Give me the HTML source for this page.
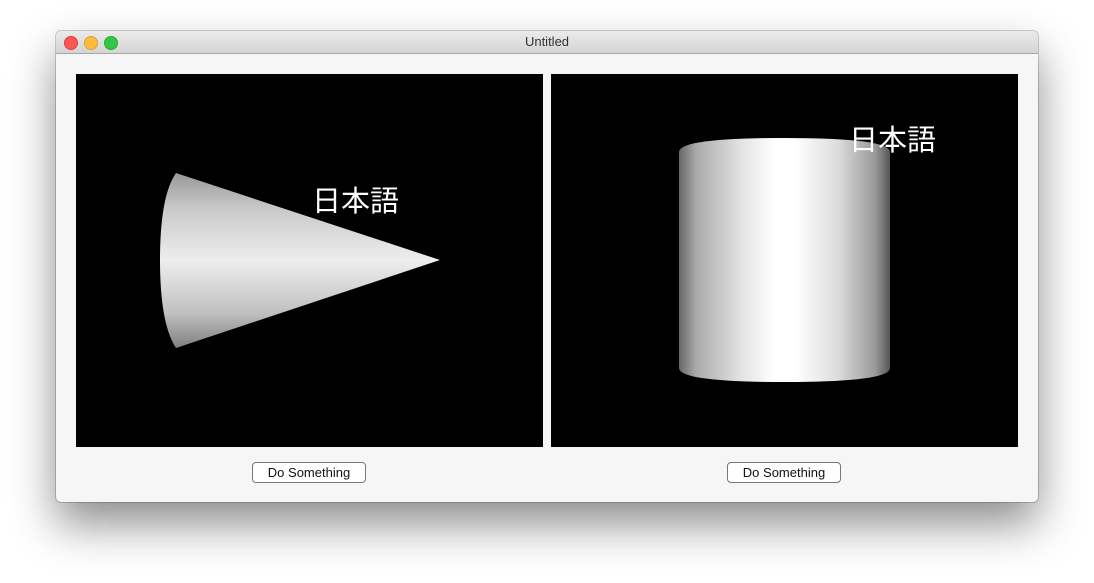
<!DOCTYPE html>
<html><head><meta charset="utf-8"><style>
html,body{margin:0;padding:0;background:#fff;width:1094px;height:583px;overflow:hidden}
.win{position:absolute;left:56px;top:31px;width:982px;height:471px;background:#f6f6f6;border-radius:5px;box-shadow:0 22px 45px rgba(0,0,0,0.45),0 0 0 1px rgba(0,0,0,0.18);overflow:hidden}
.tb{position:absolute;left:0;top:0;width:982px;height:22px;background:linear-gradient(#ebebeb,#d5d5d5);border-bottom:1px solid #a8a8a8;font:13px "Liberation Sans",sans-serif;color:#333;text-align:center;line-height:22px}
.dot{position:absolute;top:5px;width:12px;height:12px;border-radius:50%}
.panel{position:absolute;top:43px;width:467px;height:373px;background:#000}
.btn{position:absolute;top:431px;width:112px;height:19px;border:1px solid #777;border-radius:4px;background:#fff;font:13px "Liberation Sans",sans-serif;color:#111;text-align:center;line-height:19px;box-sizing:content-box}
svg text{font-family:"Liberation Sans","Noto Sans CJK JP",sans-serif;fill:#fff;font-size:29px}
</style></head><body>
<div class="win">
<div class="tb">Untitled
<div class="dot" style="left:8px;background:#fc5753;border:0.5px solid #df3e3a"></div>
<div class="dot" style="left:28px;background:#fdbc40;border:0.5px solid #de9f34"></div>
<div class="dot" style="left:48px;background:#33c748;border:0.5px solid #27aa35"></div>
</div>
<div class="panel" style="left:20px">
<svg width="467" height="373">
<defs><linearGradient id="cg" x1="0" y1="99" x2="0" y2="274" gradientUnits="userSpaceOnUse">
<stop offset="0" stop-color="#999"/><stop offset="0.2" stop-color="#c8c8c8"/><stop offset="0.5" stop-color="#eeeeee"/><stop offset="0.8" stop-color="#c0c0c0"/><stop offset="1" stop-color="#808080"/></linearGradient></defs>
<path d="M100 99 L364 186 L100 274 Q84 250 84 186 Q84 122 100 99 Z" fill="url(#cg)"/>
<text x="236" y="137">日本語</text>
</svg></div>
<div class="panel" style="left:495px">
<svg width="467" height="373">
<defs><linearGradient id="yg" x1="128" y1="0" x2="339" y2="0" gradientUnits="userSpaceOnUse">
<stop offset="0" stop-color="#666"/><stop offset="0.08" stop-color="#aaa"/><stop offset="0.3" stop-color="#e4e4e4"/><stop offset="0.45" stop-color="#fff"/><stop offset="0.55" stop-color="#fff"/><stop offset="0.75" stop-color="#ddd"/><stop offset="0.93" stop-color="#999"/><stop offset="1" stop-color="#555"/></linearGradient></defs>
<path d="M128 78 Q128 64 233 64 Q339 64 339 78 L339 294 Q339 308 233 308 Q128 308 128 294 Z" fill="url(#yg)"/>
<text x="298" y="76">日本語</text>
</svg></div>
<div class="btn" style="left:196px">Do Something</div>
<div class="btn" style="left:671px">Do Something</div>
</div>
</body></html>
